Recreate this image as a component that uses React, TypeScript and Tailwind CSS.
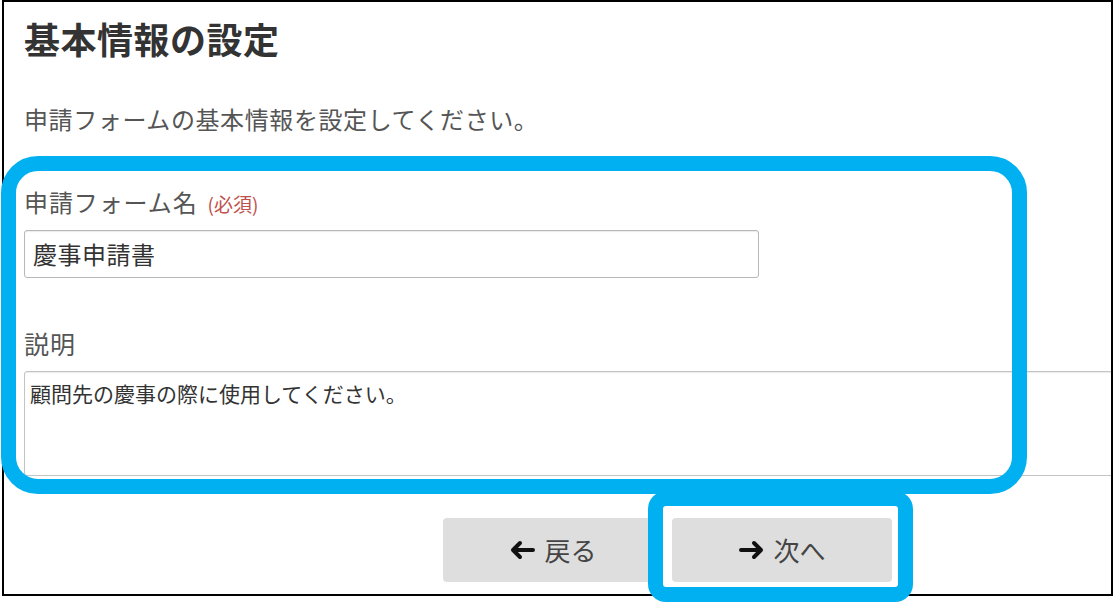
import React from 'react';

const Arrow = ({ dir }: { dir: 'left' | 'right' }) => (
  <svg width="27" height="20" viewBox="0 0 27 20" className="shrink-0">
    {dir === 'left' ? (
      <path d="M24 10H4M11 3L4 10l7 7" fill="none" stroke="#111" strokeWidth="4" strokeLinecap="round" strokeLinejoin="round" />
    ) : (
      <path d="M3 10h20M16 3l7 7-7 7" fill="none" stroke="#111" strokeWidth="4" strokeLinecap="round" strokeLinejoin="round" />
    )}
  </svg>
);

const App = () => {
  return (
    <div className="relative w-[1114px] h-[602px] bg-white font-['Noto_Sans_CJK_JP',sans-serif] overflow-hidden">
      <div className="ml-[2px] w-[1111px] h-[596px] border-2 border-black overflow-hidden pl-[20px]">
        {/* Header */}
        <h1 className="mt-[18px] text-[36px] leading-none font-bold text-[#333] tracking-[0.5px]">基本情報の設定</h1>
        <p className="mt-[51px] text-[24px] leading-none text-[#555] tracking-[0.6px]">申請フォームの基本情報を設定してください。</p>

        {/* Form name */}
        <div className="mt-[59px] flex items-baseline gap-[10px] leading-none">
          <span className="text-[24px] text-[#555] tracking-[0.9px]">申請フォーム名</span>
          <span className="text-[19px] text-[#c0504d]">(必須)</span>
        </div>
        <div className="mt-[16px] w-[735px] h-[48px] border border-[#b8b8b8] rounded-[3px] shadow-[inset_0_1px_1px_rgba(0,0,0,0.08)] flex items-center pl-[8px]">
          <span className="text-[24px] leading-none text-[#333] tracking-[0.5px]">慶事申請書</span>
        </div>

        {/* Description */}
        <p className="mt-[53px] text-[25px] leading-none text-[#555] tracking-[1px]">説明</p>
        <div className="mt-[15px] w-[1100px] h-[105px] border border-[#c4c4c4] rounded-[3px] shadow-[inset_0_1px_1px_rgba(0,0,0,0.08)] pt-[11px] pl-[5px]">
          <span className="text-[21px] leading-none text-[#333]">顧問先の慶事の際に使用してください。</span>
        </div>

        {/* Buttons */}
        <div className="mt-[42px] ml-[419px] flex gap-[9px]">
          <button className="w-[220px] h-[64px] bg-[#dedede] rounded-[4px] flex items-center justify-center gap-[8px] text-[26px] leading-none text-[#444]">
            <Arrow dir="left" />
            戻る
          </button>
          <button className="w-[220px] h-[64px] bg-[#dedede] rounded-[4px] flex items-center justify-center gap-[8px] text-[26px] leading-none text-[#444]">
            <Arrow dir="right" />
            次へ
          </button>
        </div>
      </div>

      {/* Highlight annotations */}
      <div className="absolute left-[1px] top-[156px] w-[1026px] h-[338px] border-[15px] border-[#00b0f0] rounded-[37px]" />
      <div className="absolute left-[648px] top-[491px] w-[265px] h-[111px] border-[15px] border-[#00b0f0] rounded-[18px]" />
    </div>
  );
};

export default App;
